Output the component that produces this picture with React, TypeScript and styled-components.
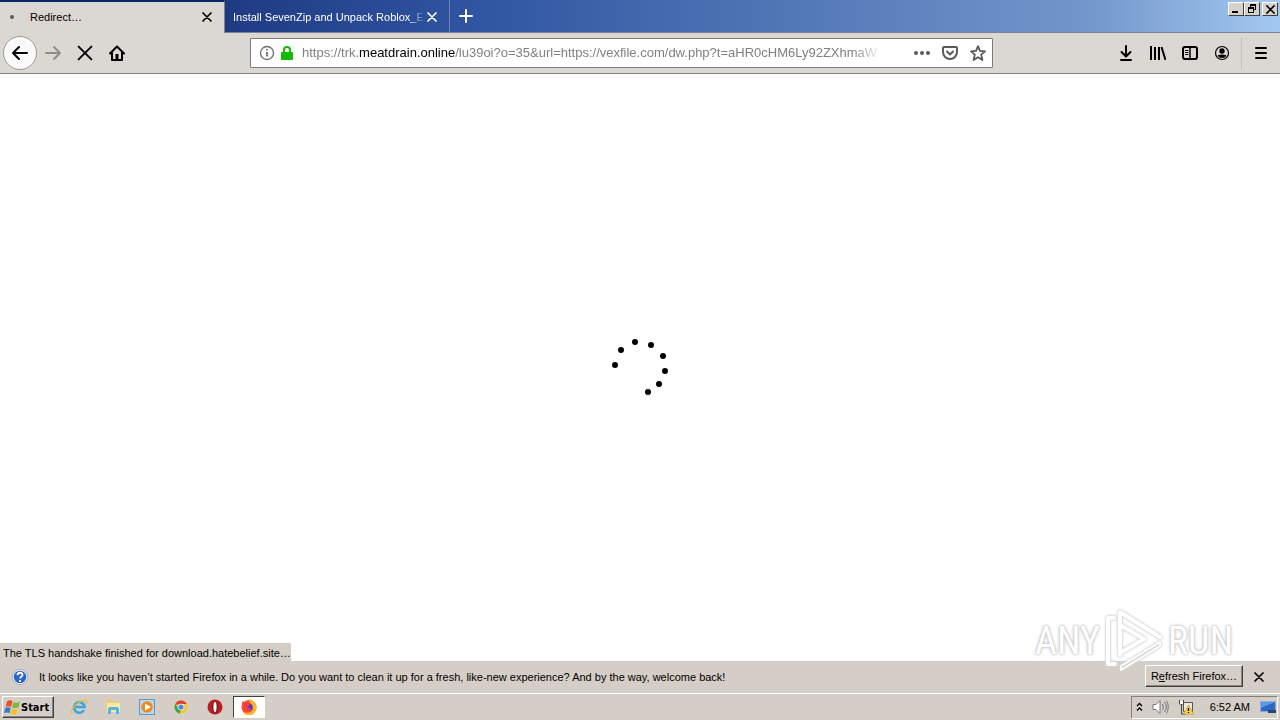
import React from "react";
import styled, { createGlobalStyle, css } from "styled-components";

const Global = createGlobalStyle`
  * { box-sizing: border-box; }
  body { margin: 0; background: #fff; }
  body, button, input { font-family: "Liberation Sans", Tahoma, sans-serif; font-size: 11px; color: #000; }
  button { margin: 0; padding: 0; }
  svg { display: block; flex: none; }
`;

const Screen = styled.div`
  position: relative;
  display: flex;
  flex-direction: column;
  min-height: 100vh;
  overflow: hidden;
`;

const TitleBar = styled.header`
  display: flex;
  height: 33px;
  background: linear-gradient(90deg, #0f2869 0%, #1f3b84 18%, #3156a2 38%, #5075b5 60%, #7396cb 85%, #a3c8f0 100%);
  border-bottom: 1px solid #7d848f;
`;

const Tab = styled.div<{ $active?: boolean }>`
  display: flex;
  align-items: center;
  width: 225px;
  height: 32px;
  padding: 1px 9px 0 8px;
  border-right: 1px solid #6c83b3;
  color: #fff;
  ${(p) =>
    p.$active &&
    css`
      height: 33px;
      color: #000;
      background: #dbd7d2;
      border-top: 2px solid #0a246a;
      border-right-color: #7d848f;
      padding: 0 9px 1px 8px;
    `}
`;

const TabTitle = styled.span<{ $fade?: boolean }>`
  flex: 1;
  min-width: 0;
  overflow: hidden;
  white-space: nowrap;
  ${(p) => p.$fade && css`mask-image: linear-gradient(90deg, #000 92%, transparent);`}
`;

const Throbber = styled.span`
  width: 4px;
  height: 4px;
  margin: 0 16px 0 2px;
  border-radius: 50%;
  background: #5c5957;
`;

const IconButton = styled.button<{ $w?: number }>`
  display: flex;
  align-items: center;
  justify-content: center;
  flex: none;
  width: ${(p) => p.$w ?? 32}px;
  height: 32px;
  border: 0;
  background: none;
  color: inherit;
  &:disabled { color: #908d89; }
`;

const CloseTab = styled(IconButton)`
  width: 14px;
  padding-right: 1px;
  margin-right: 1px;
  height: 28px;
`;

const NewTab = styled(IconButton)`
  color: #fff;
`;

const BackButton = styled(IconButton)`
  width: 34px;
  height: 34px;
  border: 1px solid #9c9995;
  border-radius: 50%;
  background: #fafafa;
`;

const WindowButtons = styled.div`
  display: flex;
  margin: 2px 2px 0 auto;
`;

const CaptionButton = styled.button<{ $gap?: boolean }>`
  display: flex;
  align-items: center;
  justify-content: center;
  width: 16px;
  height: 14px;
  margin-left: ${(p) => (p.$gap ? 2 : 0)}px;
  background: #d6d1c9;
  border: 1px solid;
  border-color: #fff #404040 #404040 #fff;
`;

const Toolbar = styled.nav`
  display: flex;
  align-items: center;
  height: 41px;
  padding: 0 3px;
  background: #dbd7d2;
  border-bottom: 1px solid #85817d;
`;

const ToolGroup = styled.div`
  display: flex;
  align-items: center;
  flex: 1 1 0;
`;

const Tools = styled(ToolGroup)`
  flex-basis: 37px;
  justify-content: flex-end;
`;

const UrlBox = styled.div`
  display: flex;
  align-items: center;
  flex: 0 1 743px;
  min-width: 0;
  height: 30px;
  padding-left: 8px;
  background: #fff;
  border: 1px solid #7c7a78;
  border-radius: 1px;
  color: #5a5a5a;
`;

const UrlText = styled.a`
  flex: 1;
  min-width: 0;
  margin: 0 26px 0 7px;
  overflow: hidden;
  white-space: nowrap;
  font-size: 13px;
  line-height: 20px;
  color: #808080;
  text-decoration: none;
  mask-image: linear-gradient(90deg, #000 95%, transparent);
`;

const Host = styled.span`
  color: #000;
`;

const Divider = styled.span`
  width: 1px;
  height: 32px;
  margin: 0 3px;
  background: #c3bfba;
`;

const Page = styled.main`
  position: relative;
  display: flex;
  flex: 1;
  align-items: center;
  justify-content: center;
  background: #fff;
`;

const Status = styled.div`
  position: absolute;
  left: 0;
  bottom: 0;
  height: 18px;
  padding: 0 0 0 3px;
  line-height: 20px;
  background: #d5cec7;
  white-space: nowrap;
`;

const Notice = styled.section`
  display: flex;
  align-items: center;
  height: 32px;
  padding: 0 6px 0 12px;
  background: #d5cec7;
`;

const NoticeText = styled.p`
  flex: 1;
  margin: 0 0 0 11px;
  white-space: nowrap;
`;

const RefreshButton = styled.button`
  width: 98px;
  height: 22px;
  margin-bottom: 2px;
  border: 1px solid;
  border-color: #fff #404040 #404040 #fff;
  background: #d5cec7;
  box-shadow: inset -1px -1px #8a857f;
  white-space: nowrap;
`;

const Taskbar = styled.footer`
  display: flex;
  align-items: center;
  height: 27px;
  padding: 0 2px;
  background: #d5cec7;
  border-top: 1px solid #fff;
`;

const StartButton = styled.button`
  display: flex;
  align-items: center;
  width: 52px;
  height: 22px;
  margin-right: 9px;
  padding-left: 1px;
  border: 1px solid;
  border-color: #fff #404040 #404040 #fff;
  box-shadow: inset -1px -1px #8a857f;
  background: #d5cec7;
  font-family: "DejaVu Sans Condensed", "DejaVu Sans", sans-serif;
  font-weight: bold;
`;

const TaskButton = styled.button<{ $active?: boolean }>`
  display: flex;
  align-items: center;
  justify-content: center;
  width: 32px;
  height: 22px;
  margin-right: 2px;
  border: 1px solid transparent;
  background: none;
  ${(p) =>
    p.$active &&
    css`
      background: #fff;
      border-color: #404040 #fff #fff #404040;
    `}
`;

const Tray = styled.div`
  display: flex;
  align-items: center;
  height: 23px;
  margin-left: auto;
  padding: 0 0 0 4px;
  border: 1px solid;
  border-color: #85807a #fff #fff #85807a;
`;

const TrayButton = styled.button<{ $w: number }>`
  display: flex;
  align-items: center;
  justify-content: center;
  width: ${(p) => p.$w}px;
  height: 20px;
  border: 0;
  background: none;
`;

const Clock = styled.time`
  margin: 0 9px 0 16px;
`;

const Watermark = styled.div`
  position: absolute;
  right: 47px;
  bottom: 46px;
  display: flex;
  align-items: center;
  gap: 4px;
  height: 66px;
  font-family: "Roboto Condensed", Roboto, sans-serif;
  font-size: 38px;
  line-height: 66px;
  color: #fff;
  text-shadow: 0 0 2px #bbb, 0 0 3px #ccc, 0 0 4px #ddd;
  pointer-events: none;
  svg { filter: drop-shadow(0 0 1px #ccc) drop-shadow(0 0 1px #ddd); }
`;

const line = { fill: "none", stroke: "currentColor", strokeWidth: 2, strokeLinecap: "round", strokeLinejoin: "round" } as const;

const Cross = ({ size = 10, w = 1.7 }: { size?: number; w?: number }) => (
  <svg width={size} height={size} viewBox="0 0 10 10" {...line} strokeWidth={w}>
    <path d="M1 1l8 8M9 1l-8 8" />
  </svg>
);

const Arrow = ({ flip }: { flip?: boolean }) => (
  <svg width="18" height="16" viewBox="0 0 18 16" {...line}>
    <path d={flip ? "M2 8h14M10 2l6 6-6 6" : "M16 8H2M8 2L2 8l6 6"} />
  </svg>
);

const dots = [
  [15, 365], [21, 350], [35, 342], [51, 345], [63, 356], [65, 371], [59, 384], [48, 392],
];

const Flag = () => (
  <svg width="17" height="17" viewBox="0 0 16 16">
    <path d="M3 2c2-1 4-1 5 .4L6.600 7.500C5 6.500 3.400 6.500 1.500 7.400z" fill="#e8502a" />
    <path d="M9 2.800c2 1 4 .8 6-.2l-1.500 5.200c-2 1-4 1-6-.1z" fill="#7fb83a" />
    <path d="M1.200 8.400c2-1 3.600-.9 5.100.1L5 13.300C3.400 12.300 1.700 12.500 0 13.200z" fill="#3a78d0" />
    <path d="M7.200 9c2 1 4 1 6 .1L11.700 14c-2 1-4 .8-5.900-.2z" fill="#f8c22c" />
  </svg>
);

export default function App() {
  return (
    <Screen>
      <Global />
      <TitleBar>
        <Tab $active>
          <Throbber />
          <TabTitle>Redirect…</TabTitle>
          <CloseTab aria-label="Close tab"><Cross /></CloseTab>
        </Tab>
        <Tab>
          <TabTitle $fade>Install SevenZip and Unpack Roblox_E</TabTitle>
          <CloseTab aria-label="Close tab"><Cross /></CloseTab>
        </Tab>
        <NewTab aria-label="New tab">
          <svg width="14" height="14" viewBox="0 0 14 14" {...line}><path d="M7 1v12M1 7h12" /></svg>
        </NewTab>
        <WindowButtons>
          <CaptionButton aria-label="Minimize"><svg width="10" height="8"><path d="M1 6h6v2H1z" /></svg></CaptionButton>
          <CaptionButton aria-label="Restore">
            <svg width="10" height="10" viewBox="0 0 10 10" fill="none" stroke="#000" shapeRendering="crispEdges">
              <path d="M3.500 3V.5h5v5H7M3 1.500h6M1.500 4v4.500h5V4zM1 4.500h6M1 3.500h6" />
            </svg>
          </CaptionButton>
          <CaptionButton $gap aria-label="Close"><Cross size={9} /></CaptionButton>
        </WindowButtons>
      </TitleBar>
      <Toolbar aria-label="Navigation">
        <ToolGroup>
          <BackButton aria-label="Back"><Arrow /></BackButton>
          <IconButton disabled aria-label="Forward"><Arrow flip /></IconButton>
          <IconButton aria-label="Stop"><Cross size={16} w={1.2} /></IconButton>
          <IconButton aria-label="Home">
            <svg width="16" height="16" viewBox="0 0 16 16" {...line}>
              <path d="M1 8.500L8 1.500l7 7M3 8v7h10V8" /><path d="M8 9v5" strokeWidth="3" strokeLinecap="butt" />
            </svg>
          </IconButton>
        </ToolGroup>
        <UrlBox>
          <svg width="16" height="16" viewBox="0 0 16 16" fill="none" stroke="#6b6b6b">
            <circle cx="8" cy="8" r="6.500" strokeWidth="1.300" /><path d="M8 7v4.500M8 4v1.600" strokeWidth="1.700" />
          </svg>
          <svg width="20" height="16" viewBox="0 0 20 16">
            <path d="M9 8V5a3 3 0 0 1 6 0v3" fill="none" stroke="#12bc00" strokeWidth="2" />
            <rect x="6" y="7" width="12" height="8" rx="1" fill="#12bc00" />
          </svg>
          <UrlText href="#">
            https://trk.<Host>meatdrain.online</Host>/lu39oi?o=35&amp;url=https://vexfile.com/dw.php?t=aHR0cHM6Ly92ZXhmaW
          </UrlText>
          <IconButton $w={28} aria-label="Page actions">
            <svg width="16" height="6" fill="#5a5a5a"><circle cx="2" cy="3" r="2" /><circle cx="8" cy="3" r="2" /><circle cx="14" cy="3" r="2" /></svg>
          </IconButton>
          <IconButton $w={28} aria-label="Save to Pocket">
            <svg width="16" height="16" viewBox="0 0 16 16" {...line}>
              <path d="M2 2h12q1 0 1 1v4a7 7 0 0 1-14 0V3q0-1 1-1z" /><path d="M5 6.500l3 3 3-3" />
            </svg>
          </IconButton>
          <IconButton $w={28} aria-label="Bookmark">
            <svg width="16" height="16" viewBox="0 0 16 16" {...line} strokeWidth={1.8}>
              <path d="M8 1.200l2 4.600 5 .5-3.800 3.300L12.400 15 8 12.200 3.600 15l1.200-5.400L1 6.300l5-.5z" />
            </svg>
          </IconButton>
        </UrlBox>
        <Tools>
          <IconButton aria-label="Downloads">
            <svg width="16" height="16" viewBox="0 0 16 16" {...line}><path d="M8 1v10M3.500 7L8 11.500 12.500 7M3 15h10" /></svg>
          </IconButton>
          <IconButton aria-label="Library">
            <svg width="16" height="16" viewBox="0 0 16 16" {...line} strokeLinecap="butt"><path d="M1 1v14M5 2v13M9 2v13M11.500 2l4 13" /></svg>
          </IconButton>
          <IconButton aria-label="Sidebars">
            <svg width="16" height="16" viewBox="0 0 16 16" {...line}>
              <rect x="1" y="2" width="14" height="12" rx="2" /><path d="M8 2v12" strokeWidth="1.500" /><path d="M3.500 5.500H6M3.500 7.500H6M3.500 9.500H6" strokeWidth="1" />
            </svg>
          </IconButton>
          <IconButton aria-label="Account">
            <svg width="16" height="16" viewBox="0 0 16 16">
              <circle cx="8" cy="8" r="6.500" fill="none" stroke="#000" strokeWidth="1.200" />
              <circle cx="8" cy="6" r="2.700" /><path d="M3.500 10.500Q8 8.500 12.500 10.500 11 13 8 13T3.500 10.500z" />
            </svg>
          </IconButton>
          <Divider />
          <IconButton aria-label="Menu">
            <svg width="14" height="14" viewBox="0 0 14 14" {...line}><path d="M2 2h10M2 7h10M2 12h10" /></svg>
          </IconButton>
        </Tools>
      </Toolbar>
      <Page>
        <svg width="60" height="60" viewBox="10 338 60 60" role="img" aria-label="Loading">
          {dots.map(([x, y]) => <circle key={x} cx={x} cy={y} r="3" />)}
        </svg>
        <Status>The TLS handshake finished for download.hatebelief.site…</Status>
      </Page>
      <Notice>
        <svg width="16" height="16" viewBox="0 0 16 16">
          <circle cx="8" cy="8" r="7" fill="#2d63c8" stroke="#f0f3fa" strokeWidth="1.500" />
          <circle cx="8" cy="8" r="7.600" fill="none" stroke="#8894ad" strokeWidth=".7" />
          <path d="M5.500 6.200c0-3.200 5-3.200 5-.3 0 1.700-2.400 1.600-2.400 3.600M8 11v2" fill="none" stroke="#fff" strokeWidth="1.800" />
        </svg>
        <NoticeText>
          It looks like you haven’t started Firefox in a while. Do you want to clean it up for a fresh, like-new experience? And by the way, welcome back!
        </NoticeText>
        <RefreshButton>R<u>e</u>fresh Firefox…</RefreshButton>
        <IconButton $w={31} aria-label="Dismiss"><Cross /></IconButton>
      </Notice>
      <Taskbar>
        <StartButton><Flag />Start</StartButton>
        <TaskButton aria-label="Internet Explorer">
          <svg width="18" height="18" viewBox="0 0 18 18" fill="none">
            <path d="M14 12a5.300 5.300 0 1 1 .6-3H5" stroke="#39a5e4" strokeWidth="2.600" />
            <path d="M2 15.500C-.5 12 9 1.500 16 2.500c1 .5.800 2 .2 3" stroke="#e9b93c" strokeWidth="1.300" />
          </svg>
        </TaskButton>
        <TaskButton aria-label="Explorer">
          <svg width="18" height="18" viewBox="0 0 18 18">
            <path d="M2 2h5l1 2h7v9H2z" fill="#e9cf72" /><path d="M3 5h13v9H3z" fill="#f8eaa5" />
            <path d="M4 16v-5q0-2 2-2h7q2 0 2 2v5h-3v-4H7v4z" fill="#58b3e2" />
          </svg>
        </TaskButton>
        <TaskButton aria-label="Media Player">
          <svg width="18" height="18" viewBox="0 0 18 18">
            <rect x="1.500" y="1.500" width="15" height="15" fill="#b8d9f2" stroke="#5c9acb" /><circle cx="9" cy="9" r="5.800" fill="#f08a1c" /><path d="M7 5.500l6 3.500-6 3.500z" fill="#fff" />
          </svg>
        </TaskButton>
        <TaskButton aria-label="Chrome">
          <svg width="16" height="16" viewBox="0 0 16 16">
            <circle cx="8" cy="8" r="6.500" fill="#f8c91d" />
            <path d="M8 8L2.400 4.700A6.500 6.500 0 0 1 13.800 5H8z" fill="#e2402f" />
            <path d="M8 8l-1 6.500A6.500 6.500 0 0 1 2.400 4.700L5.400 10z" fill="#35a552" />
            <circle cx="8" cy="8" r="3.300" fill="#fff" /><circle cx="8" cy="8" r="2.600" fill="#4285f4" />
          </svg>
        </TaskButton>
        <TaskButton aria-label="Opera">
          <svg width="16" height="16" viewBox="0 0 16 16">
            <circle cx="8" cy="8" r="7.500" fill="#b51f1f" /><ellipse cx="8" cy="8" rx="2.900" ry="5.600" fill="#7a0d0d" /><ellipse cx="8" cy="8" rx="1.600" ry="5" fill="#fff" />
          </svg>
        </TaskButton>
        <TaskButton $active aria-label="Firefox">
          <svg width="18" height="18" viewBox="0 0 18 18">
            <circle cx="9" cy="9.500" r="7.500" fill="#ff4a30" />
            <path d="M9 1c4 1 7.500 4 7.500 8.500S13 17 9 17c-3 0-5-1-6-3 5 2 9 0 10-3 .5-4-4-5-4-10z" fill="#ffb52b" />
            <circle cx="9" cy="9" r="3.600" fill="#4b3fc4" /><path d="M2 5l1-2 2 2c2 0 4 1 5 2l-3 2 4 2c-3 3-8 1-9-6z" fill="#ff3d3d" />
          </svg>
        </TaskButton>
        <Tray>
          <TrayButton $w={8} aria-label="Show hidden icons">
            <svg width="7" height="10" viewBox="0 0 7 10" fill="none" stroke="#000" strokeWidth="1.300"><path d="M1 4l2.500-2.500L6 4M1 8.500L3.500 6 6 8.500" /></svg>
          </TrayButton>
          <TrayButton $w={34} aria-label="Volume">
            <svg width="17" height="16" viewBox="0 0 17 16" fill="none" stroke="#777">
              <path d="M1 5.500h3l4-4v13l-4-4H1z" fill="#fff" /><path d="M10.500 5q2 3 0 6M12.500 3q3.500 5 0 10M14.500 1.500q3.500 6.500 0 13" />
            </svg>
          </TrayButton>
          <TrayButton $w={16} aria-label="Network">
            <svg width="16" height="16" viewBox="0 0 16 16">
              <path d="M5.500 3.500h9v9h-9z" fill="#e8e8e4" stroke="#555" /><path d="M1.500 1v4h4V1M3.500 5v10h4" fill="none" stroke="#444" /><path d="M2 2h3v3H2z" fill="#fff" />
              <path d="M10.500 6l5 9h-10z" fill="#ffd83b" stroke="#c59a12" strokeWidth=".7" /><path d="M10.500 9v3M10.500 13v1" stroke="#000" strokeWidth="1.300" />
            </svg>
          </TrayButton>
          <Clock>6:52 AM</Clock>
          <TrayButton $w={18} aria-label="Show desktop">
            <svg width="16" height="14" viewBox="0 0 16 14">
              <rect x=".5" y="1.500" width="15" height="10" fill="#2c68c4" stroke="#8fb0dc" /><path d="M1 2h14L1 8z" fill="#5d97e0" /><path d="M8 10h8v3H8z" fill="#29466f" />
            </svg>
          </TrayButton>
        </Tray>
      </Taskbar>
      <Watermark>
        <span>ANY</span>
        <svg width="60" height="66" viewBox="0 0 60 66" fill="none" stroke="#fff" strokeWidth="4" strokeLinejoin="round" strokeLinecap="round">
          <path d="M10 10H4v46h7" />
          <path d="M16 47V4l40 25M16 20v25l24-14-24-14" />
          <path d="M56 34L17 58v4l39-24z" strokeWidth="2" />
        </svg>
        <span>RUN</span>
      </Watermark>
    </Screen>
  );
}
